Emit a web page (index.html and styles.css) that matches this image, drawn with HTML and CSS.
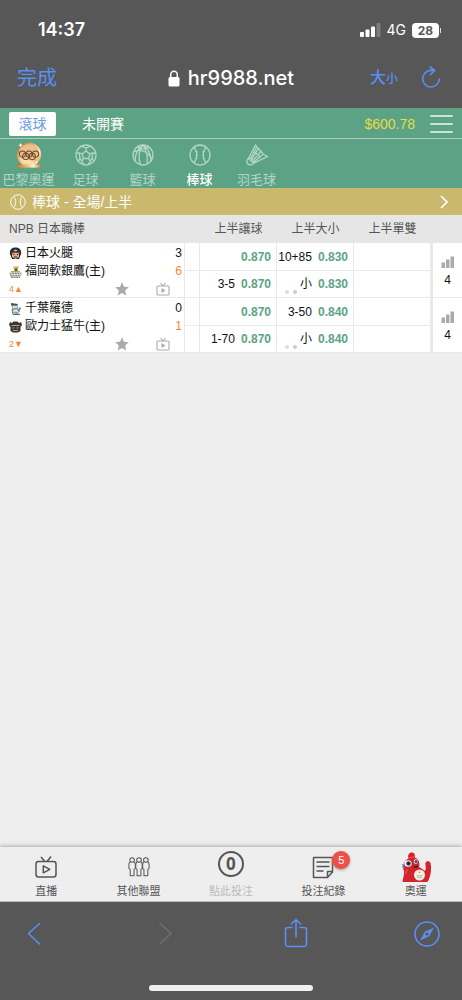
FILE: index.html
```html
<!DOCTYPE html>
<html lang="zh-Hant">
<head>
<meta charset="utf-8">
<meta name="viewport" content="width=device-width, initial-scale=1">
<title>hr9988.net</title>
<link rel="stylesheet" href="styles.css">
</head>
<body>
<svg class="sprite" aria-hidden="true">
  <symbol id="tv" viewBox="0 0 24 24"><rect x="2" y="6.5" width="20" height="15.5" rx="2.5"/><path d="M7 2l3.500 4M17 1.500L13 6.500M9.300 10.800v7l6.500-3.500z"/></symbol>
  <symbol id="tv-small" viewBox="0 0 14 14"><rect x="1" y="4" width="12" height="9" rx="1"/><path d="M4.500 1l2.500 3 2.500-3"/><path class="play" d="M5.500 6v5l4-2.500z"/></symbol>
  <symbol id="star" viewBox="0 0 14 14"><path d="M7 .3l2 4.500 4.800.5-3.600 3.200 1 4.900L7 11l-4.200 2.400 1-4.900L.2 5.300 5 4.800z"/></symbol>
  <symbol id="bars" viewBox="0 0 14 12"><path d="M.5 6.500h3.500V12H.5zM5 3.500h3.500V12H5zM9.500.5H13V12H9.500z"/></symbol>
  <symbol id="baseball" viewBox="0 0 22 22"><circle cx="11" cy="11" r="10"/><path d="M5 3.200c3.800 4.600 3.800 11 0 15.600M17 3.200c-3.800 4.600-3.800 11 0 15.600"/></symbol>
</svg>

<header class="browser-top">
  <div class="status">
    <time>14:37</time>
    <div class="status-right">
      <svg class="signal" viewBox="0 0 21 14"><rect x="0" y="9" width="4" height="5" rx="1"/><rect x="5.500" y="6.500" width="4" height="7.500" rx="1"/><rect x="11" y="3.500" width="4" height="10.500" rx="1"/><rect class="dim" x="16.500" y="0" width="4" height="14" rx="1"/></svg>
      <span class="network">4G</span>
      <span class="battery">28</span><i class="battery-tip"></i>
    </div>
  </div>
  <div class="address">
    <button class="done">完成</button>
    <div class="host"><svg viewBox="0 0 12 17"><rect x=".5" y="7" width="11" height="9.500" rx="1.600"/><path d="M2.700 8V4.800a3.300 3.500 0 0 1 6.600 0V8"/></svg><span>hr9988.net</span></div>
    <div class="address-tools">
      <button class="text-size">大<small>小</small></button>
      <button class="reload" aria-label="重新載入"><svg viewBox="0 0 20 24"><path d="M12.500 4.400H10A8.300 8.300 0 1 0 18.300 13M9.200 1l4.400 3.500-4 4"/></svg></button>
    </div>
  </div>
</header>

<div class="account">
  <button class="tab selected">滾球</button>
  <button class="tab">未開賽</button>
  <span class="balance">$600.78</span>
  <button class="menu" aria-label="選單"><i></i><i></i><i></i></button>
</div>

<nav class="sports">
  <a href="#">
    <svg viewBox="0 0 30 28"><defs><linearGradient id="gold" x1="0" y1="0" x2="1" y2="1"><stop offset="0" stop-color="#a8622c"/><stop offset=".4" stop-color="#e9b472"/><stop offset=".65" stop-color="#fff0c9"/><stop offset="1" stop-color="#c57a38"/></linearGradient><linearGradient id="stand"><stop offset="0" stop-color="#b87835"/><stop offset=".5" stop-color="#f5ce87"/><stop offset=".7" stop-color="#fff3d1"/><stop offset="1" stop-color="#b87535"/></linearGradient></defs>
      <path d="M6 22h18l1 2.500H5z" fill="#9a602e"/><circle cx="15" cy="13.500" r="13" fill="url(#gold)"/><circle cx="15" cy="13.500" r="11.300" fill="#ecc08b"/><path d="M5 18c4-1 13 1 17 5a11 11 0 0 1-16-4z" fill="#f9dda8"/><path d="M2 24h26v3.500H2z" fill="url(#stand)"/>
      <g fill="none" stroke="#6c462c" stroke-width="1.100"><circle cx="8" cy="13" r="3.300"/><circle cx="15" cy="13" r="3.300"/><circle cx="22" cy="13" r="3.300"/><circle cx="11.500" cy="15.500" r="3.300"/><circle cx="18.500" cy="15.500" r="3.300"/></g>
      <path d="M6 1l.8 1.800 1.700.7-1.700.7L6 6l-.8-1.800-1.700-.7 1.700-.7zM23 20l.6 1.500 1.500.6-1.500.6-.6 1.500-.6-1.500-1.500-.6 1.500-.6z" fill="#fff8dc"/></svg>
    <span>巴黎奧運</span>
  </a>
  <a href="#">
    <svg class="line" viewBox="0 0 22 22"><circle cx="11" cy="11" r="10"/><path d="M11 7l4 2.900-1.500 4.600h-5L7 9.900zM11 7V4M15 9.900l3-1M13.500 14.500l1.800 2.600M8.500 14.500l-1.800 2.600M7 9.900l-3-1M6.500 2.200L11 4l4.500-1.800M20.800 9L18 8.900l-1 5 1.500 3M1.200 9L4 8.900l1 5-1.500 3M9 20.500l-2.300-3.400L5 14M13 20.500l2.300-3.400L17 14"/></svg>
    <span>足球</span>
  </a>
  <a href="#">
    <svg class="line" viewBox="0 0 22 22"><circle cx="11" cy="11" r="10"/><path d="M1.500 8c5-3 13-2.500 18.500 7M11 1c-4.500 4.500-5 13-2.500 19.700M11 1c3.500 5 5 11 4 19M3 17c0-6 2.500-12 8-16M19 17c0-6-2.500-12-8-16M6 2.500c1 2.500 4 3.500 11 1"/></svg>
    <span>籃球</span>
  </a>
  <a href="#" class="current">
    <svg class="line" viewBox="0 0 22 22"><use href="#baseball"/><path d="M6 7.500h2.500M6.500 11H9M6 14.500h2.500M16 7.500h-2.500M15.500 11H13M16 14.500h-2.500" stroke-width=".6"/></svg>
    <span>棒球</span>
  </a>
  <a href="#">
    <svg class="line" viewBox="0 0 22 22"><path d="M2.300 14.500l5.200 4.800A3.600 3.600 0 1 1 2.300 14.500zM2.300 14.500c2-1.500 6 2 5.200 4.800M2.300 14.500L9.500 1.200l2.800 3.300-6.500 10.800M12.300 4.500l2.700 2.700L6.800 17M15 7.200l2.200 3L7.500 18.200M17.200 10.200l4.300 2.300-14 6.800M4.500 14.500l6-11M8 7.500l6.500 6"/></svg>
    <span>羽毛球</span>
  </a>
</nav>

<a class="category" href="#">
  <svg class="line" viewBox="0 0 22 22"><use href="#baseball"/></svg>
  <span>棒球 - 全場/上半</span>
  <svg class="chevron" viewBox="0 0 8 14"><path d="M1 1l6 6-6 6"/></svg>
</a>

<main>
  <table>
    <colgroup><col><col class="c-gap"><col class="c-odd"><col class="c-odd"><col class="c-odd"><col class="c-count"></colgroup>
    <thead><tr><th colspan="2" class="league">NPB 日本職棒</th><th>上半讓球</th><th>上半大小</th><th>上半單雙</th><th></th></tr></thead>
    <tbody>
      <tr>
        <td rowspan="2" class="teams">
          <div class="team"><svg viewBox="0 0 13 13"><path d="M1 7C0 3 3 .5 6.500.5S13 3 12 7l-2 5H3z" fill="#292735"/><path d="M3 6.500c2-1 5-1 7 0v3.500l-3.500 2L3 10z" fill="#d9ad87"/><path d="M4 3.500l2.500-1 2.500 1-2.500 1z" fill="#b9c6d3"/><path d="M2 5.500h9" stroke="#a54232"/><path d="M4.500 7.500h1M8 7.500h1M5 10h3" stroke="#332c2d"/></svg><span>日本火腿</span><b>3</b></div>
          <div class="team"><svg viewBox="0 0 13 13"><path d="M4 1l2 1 1-1.500L8 2l2-1-1 3H5z" fill="#e8b421"/><path d="M5.500 3.500h3V6h-3z" fill="#5b5546"/><path d="M2 6h9v1.500H2z" fill="#b5a45f"/><path d="M.5 8.500h12M1 10.500h11M2 12.300h9" stroke="#8b8e88" stroke-width="1.400" stroke-dasharray="2 .6"/></svg><span>福岡軟銀鷹(主)</span><b class="hot">6</b></div>
          <div class="meta"><span class="inning">4▲</span><button aria-label="收藏"><svg class="star"><use href="#star"/></svg></button><button aria-label="直播"><svg class="tv"><use href="#tv-small"/></svg></button></div>
        </td>
        <td></td>
        <td><button class="odd"><b>0.870</b></button></td>
        <td><button class="odd"><span>10+85</span><b>0.830</b></button></td>
        <td></td>
        <td rowspan="2" class="count"><a href="#"><svg><use href="#bars"/></svg>4</a></td>
      </tr>
      <tr>
        <td></td>
        <td><button class="odd"><span>3-5</span><b>0.870</b></button></td>
        <td class="dotted"><button class="odd"><span>小</span><b>0.830</b></button><i class="dots"></i></td>
        <td></td>
      </tr>
    </tbody>
    <tbody>
      <tr>
        <td rowspan="2" class="teams">
          <div class="team"><svg viewBox="0 0 13 13"><path d="M2 1l7 1-1 2-6-.5z" fill="#45505b"/><path d="M3 3.500h5l1 2-2 2H4z" fill="#d8dde0" stroke="#69717a" stroke-width=".6"/><path d="M3 7.500l5-1 2 3-3 3H4z" fill="#d9e7ed" stroke="#47728e"/><path d="M9 8l2-3 1 1-2 4" fill="#3c85a7"/><path d="M4 10.500h4" stroke="#cf9b36" stroke-width="1.500"/><path d="M6 12.300h5" stroke="#454b51"/></svg><span>千葉羅德</span><b>0</b></div>
          <div class="team"><svg viewBox="0 0 13 13"><path d="M0 5l1-3 2 1 1.500-1.500h4L10 3l2-1 1 3-1.500 2v4L9 12.500H4L1.500 11V7z" fill="#3a3732"/><path d="M2.500 5.500h8M3.500 8h2M7.500 8h2" stroke="#b8a67a"/><path d="M4 10.500h5" stroke="#aaa49b"/></svg><span>歐力士猛牛(主)</span><b class="hot">1</b></div>
          <div class="meta"><span class="inning">2▼</span><button aria-label="收藏"><svg class="star"><use href="#star"/></svg></button><button aria-label="直播"><svg class="tv"><use href="#tv-small"/></svg></button></div>
        </td>
        <td></td>
        <td><button class="odd"><b>0.870</b></button></td>
        <td><button class="odd"><span>3-50</span><b>0.840</b></button></td>
        <td></td>
        <td rowspan="2" class="count"><a href="#"><svg><use href="#bars"/></svg>4</a></td>
      </tr>
      <tr>
        <td></td>
        <td><button class="odd"><span>1-70</span><b>0.870</b></button></td>
        <td class="dotted"><button class="odd"><span>小</span><b>0.840</b></button><i class="dots"></i></td>
        <td></td>
      </tr>
    </tbody>
  </table>
</main>

<nav class="bottom">
  <a href="#"><span class="ico"><svg class="stroke" viewBox="0 0 24 24"><use href="#tv"/></svg></span>直播</a>
  <a href="#"><span class="ico"><svg class="stroke people" viewBox="0 0 24 22"><g id="person"><circle cx="4.500" cy="3.300" r="2.500"/><path d="M2.500 5.500C1 6 1 7 1 8v4.500l1.400 1V20.500h4.200V13.500l1.400-1V8c0-1 0-2-1.500-2.500"/></g><use href="#person" x="7.500"/><use href="#person" x="15"/></svg></span>其他聯盟</a>
  <a href="#" class="off"><span class="ico"><em>0</em></span>點此投注</a>
  <a href="#"><span class="ico"><svg class="stroke" viewBox="0 0 24 24"><path d="M2.500 2.500h19V17l-5 5.500h-14zM21.500 16.500h-5v5.500M5.500 7h13M5.500 11.500h13M5.500 16h7"/></svg><strong>5</strong></span>投注紀錄</a>
  <a href="#"><span class="ico"><svg class="mascot" viewBox="0 0 30 30"><path d="M1.500 30C2 26 3.500 22 3 18 1 12 4 8 7.500 6.500 6 2 9.500-.5 12.500 1c2 1 1 3 1.500 4.500C18 7 19 11 18 15c2 1 4 2 5.500 4 2.500-2 .5-5 1-8 .5-2.500 4-2.500 5 0 1.500 7 0 14-3 19z" fill="#d3242c"/><path d="M7.500 6.500c2-1.500 4-1.500 6.500-1M4.500 22c1-2 1.500-3 1.500-5" fill="none" stroke="#ee5551" stroke-width="1.200"/><ellipse cx="7" cy="11.500" rx="3.600" ry="3.200" fill="#fff"/><circle cx="7.500" cy="11.500" r="2.300" fill="#234b84"/><circle cx="7.500" cy="11.500" r="1.100" fill="#111"/><ellipse cx="14.800" cy="9.500" rx="2" ry="2.200" fill="#fff"/><circle cx="15" cy="9.500" r="1.500" fill="#234b84"/><path d="M12 13.500c2 1 4 1 5-.5v2c-2 1.500-4 1-5-1.500z" fill="#412326"/><path d="M1 12.500l2 1-1.500 1.500 2 1-1.500 2" fill="none" stroke="#4376a6"/><circle cx="18.500" cy="23" r="5.500" fill="#f5eee6"/><path d="M18.500 19l1 2h-2z" fill="#bd9b50"/><path d="M15.500 23.500h6" stroke="#c9b58f" stroke-width=".8"/><path d="M16 25.200h5" stroke="#7caea0" stroke-width=".8"/></svg></span>奧運</a>
</nav>

<footer class="browser-bottom">
  <div class="tools">
    <button aria-label="返回"><svg viewBox="0 0 28 30"><path d="M19.500 5.500L8.500 15.500l11 10.500"/></svg></button>
    <button aria-label="前進" disabled><svg viewBox="0 0 28 30"><path d="M9 5.500l11 10-11 10.500"/></svg></button>
    <button aria-label="分享"><svg viewBox="0 0 28 30"><path d="M10 9.500H6a2.500 2.500 0 0 0-2.500 2.500v14a2.500 2.500 0 0 0 2.500 2.500h16a2.500 2.500 0 0 0 2.500-2.500V12A2.500 2.500 0 0 0 22 9.500h-4M14 19V2M9.500 6L14 1.500 18.500 6"/></svg></button>
    <button aria-label="Safari"><svg viewBox="0 0 28 30"><circle cx="14" cy="16" r="12"/><path class="needle" fill-rule="evenodd" d="M21 9.500l-4.800 8.700L7 22.500l4.800-8.700zM14 14.400a1.600 1.600 0 1 0 .01 0z"/></svg></button>
  </div>
  <div class="home-bar"></div>
</footer>
</body>
</html>
```

FILE: styles.css
```css
* { box-sizing: border-box; }
body {
  margin: 0;
  min-height: 100vh;
  display: flex;
  flex-direction: column;
  background: #eee;
  color: #222;
  font: 12px/18px "Liberation Sans", "Noto Sans CJK TC", sans-serif;
}
button { border: 0; padding: 0; margin: 0; background: none; color: inherit; font: inherit; }
a { color: inherit; text-decoration: none; }
svg { display: block; flex: none; }
.sprite { position: absolute; width: 0; height: 0; }
.line { fill: none; stroke: currentColor; stroke-width: 1.3; }

/* browser chrome */
.browser-top, .browser-bottom { background: #575757; color: #fff; font-family: Inter, "Noto Sans CJK TC", sans-serif; }
.browser-top { padding: 18px 17px 12px; }
.status { display: flex; justify-content: space-between; align-items: center; height: 24px; padding: 0 4px 0 21px; font-size: 18px; font-weight: 600; }
.status-right { display: flex; align-items: center; }
.signal { width: 21px; height: 14px; fill: #fff; }
.signal .dim { fill: #7d7d7d; }
.network { margin: 0 6px; font-size: 14px; font-weight: 400; }
.battery { width: 27px; height: 15px; border-radius: 4px; background: #fff; color: #575757; font-size: 12px; font-weight: 700; line-height: 15px; text-align: center; }
.battery-tip { width: 1px; height: 5px; margin-left: 1px; background: #ddd; }
.address { display: grid; grid-template-columns: 1fr auto 1fr; align-items: center; height: 36px; margin-top: 18px; }
.done { justify-self: start; color: #5b8ff0; font-size: 20px; line-height: 28px; }
.host { display: flex; align-items: center; gap: 8px; font-size: 20px; font-weight: 500; line-height: 28px; }
.host svg { width: 12px; height: 17px; fill: #fff; }
.host path { fill: none; stroke: #fff; stroke-width: 1.5; }
.address-tools { display: flex; justify-content: flex-end; align-items: center; gap: 23px; padding-right: 4px; color: #5b8ff0; }
.text-size { font-size: 16px; font-weight: 500; }
.text-size small { font-size: 12px; }
.reload svg { width: 20px; height: 24px; fill: none; stroke: currentColor; stroke-width: 1.6; stroke-linecap: round; stroke-linejoin: round; }

/* account row */
.account { display: flex; align-items: center; height: 31px; padding: 1px 9px 0; background: #5ba384; border-bottom: 1px solid #b4cfc0; color: #fff; font-size: 14px; }
.tab { height: 24px; margin-right: 26px; }
.tab.selected { width: 47px; border-radius: 2px; background: #fff; color: #6d9ce4; }
.balance { margin-left: auto; color: #e6dc45; }
.menu { display: flex; flex-direction: column; gap: 6px; width: 23px; margin-left: 15px; }
.menu i { height: 2px; border-radius: 1px; background: #cde3d9; }

/* sports */
.sports { display: flex; height: 49px; background: #5ba384; color: #b3d6c6; }
.sports a { display: flex; flex-direction: column; align-items: center; width: 57px; padding-top: 2px; white-space: nowrap; font-size: 13px; }
.sports svg { width: 28px; height: 28px; margin-bottom: 2px; }
.sports .line { width: 22px; height: 22px; margin: 3px 0 5px; }
.sports .current span { color: #fff; font-weight: 500; }
.category { display: flex; align-items: center; gap: 6px; height: 27px; padding: 0 14px 0 10px; background: #c9b86d; color: #fff; font-size: 14px; }
.category .line { width: 16px; height: 16px; }
.chevron { width: 8px; height: 14px; margin-left: auto; fill: none; stroke: #fff; stroke-width: 1.6; }

/* odds table */
main { flex: 1; }
table { width: 100%; table-layout: fixed; border-spacing: 0; }
.c-gap { width: 15px; }
.c-odd { width: 77px; }
.c-count { width: 31px; }
th { height: 28px; padding: 0; background: #e6e6e6; color: #555; font-weight: 400; }
th.league { padding-left: 9px; text-align: left; }
td { height: 27px; padding: 0; background: #fff; border-right: 1px solid #e9e9e9; border-bottom: 1px solid #e9e9e9; }
tr:first-child td { height: 28px; }
td.count { border-left: 2px solid #e9e9e9; border-right: 0; }
td.teams { vertical-align: top; padding: 1px 2px 0 9px; }
.team { display: flex; align-items: center; gap: 3px; height: 18px; color: #111; white-space: nowrap; }
.team svg { width: 13px; height: 13px; }
.team b { margin-left: auto; font-weight: 400; }
.team .hot, .inning { color: #ef8a35; }
.meta { display: flex; align-items: center; height: 17px; padding-right: 12px; color: #aaa; }
.inning { flex: 1; font-size: 9px; }
.star { width: 14px; height: 14px; margin-right: 27px; fill: #aaa; }
.tv { width: 14px; height: 14px; fill: none; stroke: #aaa; stroke-width: 1.1; }
.play { fill: #aaa; stroke: none; }
.odd { display: flex; justify-content: flex-end; gap: 6px; width: 100%; padding-right: 5px; color: #111; }
.odd b { color: #5ba384; }
.dotted { position: relative; }
.dots { position: absolute; left: 8px; bottom: 3px; width: 4px; height: 4px; border-radius: 50%; background: #ddd; box-shadow: 8px 0 #b4d9ca; }
.count a { display: flex; flex-direction: column; align-items: center; gap: 3px; padding-top: 4px; color: #111; }
.count svg { width: 14px; height: 12px; fill: #aaa; }

/* bottom navigation */
.bottom { display: grid; grid-template-columns: repeat(5, 1fr); height: 55px; border-bottom: 1px solid #b9bfbc; background: #eee; box-shadow: 0 -1px 4px #aaa; color: #555; font-size: 11px; line-height: 16px; }
.bottom a { display: flex; flex-direction: column; align-items: center; padding-top: 4px; }
.bottom .off { color: #bbb; }
.ico { position: relative; display: flex; align-items: center; justify-content: center; width: 32px; height: 32px; }
.stroke { width: 24px; height: 24px; fill: none; stroke: #555; stroke-width: 1.5; stroke-linejoin: round; }
.people { width: 22px; height: 22px; stroke-width: 1.1; }
.mascot { width: 30px; height: 30px; }
.off .ico { align-items: flex-start; }
.ico em { width: 26px; height: 26px; border: 2px solid #555; border-radius: 50%; color: #555; font: 700 17px/22px "Noto Sans", sans-serif; text-align: center; }
.ico strong { position: absolute; left: 25px; top: 0; width: 18px; height: 18px; border-radius: 50%; background: #ee5049; box-shadow: 0 1px 3px #999; color: #fff; font: 400 11px/18px "Liberation Sans", sans-serif; text-align: center; }

.browser-bottom { padding: 16px 21px 9px 20px; }
.tools { display: flex; justify-content: space-between; color: #5b8ff0; }
.tools svg { width: 28px; height: 30px; fill: none; stroke: currentColor; stroke-width: 1.6; stroke-linecap: round; stroke-linejoin: round; }
.tools button:disabled { color: #6f6f6f; }
.tools .needle { fill: currentColor; stroke: none; }
.home-bar { width: 164px; height: 6px; margin: 37px auto 0; border-radius: 3px; background: #f0f0f0; }
```
